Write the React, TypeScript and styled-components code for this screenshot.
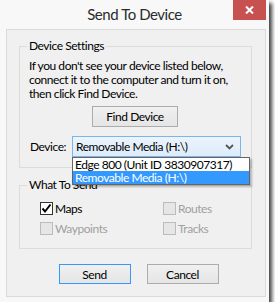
import React from 'react';
import styled, {createGlobalStyle} from 'styled-components';

const GlobalStyle = createGlobalStyle`
  html, body {
    margin: 0;
    padding: 0;
    background: #ffffff;
  }
  body {
    font-family: "Segoe UI", Lato, "Open Sans", sans-serif;
    font-size: 12px;
    letter-spacing: -0.45px;
    color: #000000;
  }
`

const Window = styled.div`
  width: 269px;
  box-sizing: border-box;
  padding: 0 3px 5px 6px;
  background: #f8f8f8;
  box-shadow: 3px 3px 4px rgba(0, 0, 0, 0.75);
`
const TitleBar = styled.div`
  display: grid;
  grid-template-columns: 1fr auto 1fr;
  align-items: start;
  height: 29px;
`
const Title = styled.div`
  grid-column: 2;
  font-size: 15px;
  line-height: 20px;
  padding-top: 4px;
  color: #2b2b2b;
  margin-left: -3px;
  white-space: nowrap;
`
const CloseButton = styled.button`
  grid-column: 3;
  justify-self: end;
  width: 33px;
  height: 20px;
  border: none;
  padding: 0;
  background: #c75050;
  display: flex;
  align-items: center;
  justify-content: center;
  cursor: pointer;
`
const Panel = styled.div`
  border: 1px solid #dadada;
  background: #f0f0f0;
  padding: 8px 0 12px 0;
`
const Group = styled.fieldset`
  margin: 0 13px 0 12px;
  border: 1px solid #dcdcdc;
  padding: 5px 10px 10px 9px;
  min-width: 0;
  & + & {
    margin-top: 9px;
  }
`
const Legend = styled.legend`
  padding: 0 2px;
  margin-left: -2px;
  line-height: 16px;
`
const Info = styled.p`
  margin: 0;
  line-height: 14px;
  white-space: nowrap;
`
const Centered = styled.div`
  display: flex;
  justify-content: center;
  margin-top: 5px;
`
const Button = styled.button<{$default?: boolean; $width: number; $height: number}>`
  width: ${p => p.$width}px;
  height: ${p => p.$height}px;
  font: inherit;
  letter-spacing: inherit;
  color: #000;
  padding: 0;
  border: 1px solid ${p => (p.$default ? '#3399ff' : '#acacac')};
  background: linear-gradient(#f0f0f0, #e5e5e5);
  cursor: pointer;
`
const DeviceRow = styled.div`
  display: flex;
  align-items: center;
  height: 21px;
  margin-top: 9px;
  position: relative;
  z-index: 2;
`
const DeviceLabel = styled.span`
  width: 43px;
  padding-left: 1px;
`
const SelectWrap = styled.div`
  position: relative;
`
const SelectBox = styled.div`
  width: 169px;
  height: 21px;
  box-sizing: border-box;
  border: 1px solid #7eb4ea;
  background: linear-gradient(#ecf4fc, #dcecfc);
  display: flex;
  align-items: center;
  justify-content: space-between;
  padding: 0 6px 0 3px;
  white-space: nowrap;
`
const DropList = styled.ul`
  position: absolute;
  top: 100%;
  left: 0;
  width: 178px;
  box-sizing: border-box;
  margin: 0;
  padding: 0;
  list-style: none;
  background: #ffffff;
  border: 1px solid #646464;
  box-shadow: 2px 2px 2px rgba(0, 0, 0, 0.25);
`
const DropItem = styled.li<{$selected?: boolean}>`
  height: 13px;
  line-height: 13px;
  padding-left: 2px;
  white-space: nowrap;
  background: ${p => (p.$selected ? '#3399ff' : 'transparent')};
  color: ${p => (p.$selected ? '#ffffff' : '#000000')};
`
const Checks = styled.div`
  display: grid;
  grid-template-columns: 123px 1fr;
  grid-auto-rows: 20px;
  padding: 0 0 0 11px;
`
const CheckItem = styled.label<{$disabled?: boolean}>`
  display: flex;
  align-items: center;
  gap: 2px;
  white-space: nowrap;
  color: ${p => (p.$disabled ? '#a0a0a0' : '#000000')};
`
const Box = styled.span<{$disabled?: boolean}>`
  width: 13px;
  height: 13px;
  box-sizing: border-box;
  border: 1px solid ${p => (p.$disabled ? '#bcbcbc' : '#333333')};
  background: ${p => (p.$disabled ? '#e6e6e6' : '#ffffff')};
  display: flex;
  align-items: center;
  justify-content: center;
`
const Footer = styled.div`
  display: flex;
  justify-content: center;
  gap: 16px;
  margin-top: 15px;
  padding-left: 5px;
`

const Check = ({label, checked, disabled}: {label: string; checked?: boolean; disabled?: boolean}) => (
    <CheckItem $disabled={disabled}>
        <Box $disabled={disabled}>
            {checked && (
                <svg width="11" height="11" viewBox="0 0 11 11">
                    <polyline points="1.5,5.5 4,8.5 9.5,1.5" fill="none" stroke="#000" strokeWidth="2"/>
                </svg>
            )}
        </Box>
        {label}
    </CheckItem>
);

const App = () => {
    return (
        <Window>
            <GlobalStyle/>
            <TitleBar>
                <Title>Send To Device</Title>
                <CloseButton aria-label="Close">
                    <svg width="9" height="8" viewBox="0 0 9 8">
                        <path d="M1 0.5 L8 7.5 M8 0.5 L1 7.5" stroke="#fff" strokeWidth="2"/>
                    </svg>
                </CloseButton>
            </TitleBar>
            <Panel>
                <Group>
                    <Legend>Device Settings</Legend>
                    <Info>
                        If you don't see your device listed below,<br/>
                        connect it to the computer and turn it on,<br/>
                        then click Find Device.
                    </Info>
                    <Centered>
                        <Button $width={86} $height={21}>Find Device</Button>
                    </Centered>
                    <DeviceRow>
                        <DeviceLabel>Device:</DeviceLabel>
                        <SelectWrap>
                            <SelectBox>
                                <span>Removable Media (H:\)</span>
                                <svg width="9" height="6" viewBox="0 0 9 6">
                                    <polyline points="1,1 4.5,4.5 8,1" fill="none" stroke="#555" strokeWidth="1.8"/>
                                </svg>
                            </SelectBox>
                            <DropList>
                                <DropItem>Edge 800 (Unit ID 3830907317)</DropItem>
                                <DropItem $selected>Removable Media (H:\)</DropItem>
                            </DropList>
                        </SelectWrap>
                    </DeviceRow>
                </Group>
                <Group>
                    <Legend>What To Send</Legend>
                    <Checks>
                        <Check label="Maps" checked/>
                        <Check label="Routes" disabled/>
                        <Check label="Waypoints" disabled/>
                        <Check label="Tracks" disabled/>
                    </Checks>
                </Group>
                <Footer>
                    <Button $default $width={72} $height={20}>Send</Button>
                    <Button $width={72} $height={20}>Cancel</Button>
                </Footer>
            </Panel>
        </Window>
    );
};

export default App;
